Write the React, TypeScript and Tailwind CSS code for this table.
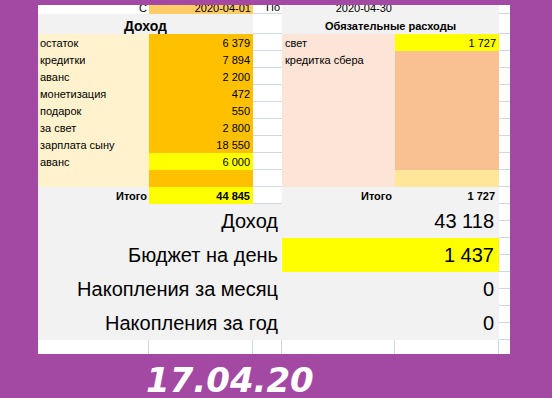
import React from "react";

const line = "border-b border-[#d0d7e5]";
const data = "flex items-end text-[11px] leading-[15px] px-[2px]";
const big = "flex items-center text-[20px] leading-[23px] bg-[#f2f2f2]";

const income: [string, string, string][] = [
  ["остаток", "6 379", "bg-[#ffc000]"],
  ["кредитки", "7 894", "bg-[#ffc000]"],
  ["аванс", "2 200", "bg-[#ffc000]"],
  ["монетизация", "472", "bg-[#ffc000]"],
  ["подарок", "550", "bg-[#ffc000]"],
  ["за свет", "2 800", "bg-[#ffc000]"],
  ["зарплата сыну", "18 550", "bg-[#ffc000]"],
  ["аванс", "6 000", "bg-[#ffff00]"],
  ["", "", "bg-[#ffc000]"],
];

const expenses: [string, string, string][] = [
  ["свет", "1 727", "bg-[#ffff00]"],
  ["кредитка сбера", "", "bg-[#f9c191]"],
  ["", "", "bg-[#f9c191]"],
  ["", "", "bg-[#f9c191]"],
  ["", "", "bg-[#f9c191]"],
  ["", "", "bg-[#f9c191]"],
  ["", "", "bg-[#f9c191]"],
  ["", "", "bg-[#f9c191]"],
  ["", "", "bg-[#ffe699]"],
];

const summary = [
  { label: "Доход", value: "43 118", hl: false },
  { label: "Бюджет на день", value: "1 437", hl: true },
  { label: "Накопления за месяц", value: "0", hl: false },
  { label: "Накопления за год", value: "0", hl: false },
];

const App = () => {
  return (
    <div className="w-[552px] h-[398px] bg-[#a349a4] pt-[5px] overflow-hidden font-['Liberation_Sans',Arial,sans-serif] text-black">
      {/* Sheet */}
      <div className="ml-[38px] w-[472px] bg-white grid grid-cols-[111px_104px_29px_113px_104px_11px] grid-rows-[9px_20px_repeat(18,17px)_14px] overflow-hidden">
        {/* Row 1: dates */}
        <div className="flex items-end justify-end px-[2px] text-[11px] leading-[12px] overflow-hidden">С</div>
        <div className="flex items-end justify-end px-[2px] text-[11px] leading-[12px] overflow-hidden bg-[#ffcc66]">2020-04-01</div>
        <div className={`flex items-end justify-end px-[2px] text-[11px] leading-[12px] overflow-hidden ${line}`}>По</div>
        <div className="flex items-end justify-end px-[3px] text-[11px] leading-[12px] overflow-hidden bg-[#f2f2f2]">2020-04-30</div>
        <div className="bg-[#f2f2f2]" />
        <div className={line} />

        {/* Row 2: headers */}
        <div className="col-span-2 flex items-end justify-center bg-[#f2f2f2] text-[14px] leading-[16px] font-bold">Доход</div>
        <div className={line} />
        <div className="col-span-2 flex items-end justify-center bg-[#f2f2f2] text-[11px] leading-[15px] font-bold">Обязательные расходы</div>
        <div className={line} />

        {/* Data rows */}
        {income.map(([label, value, bg], i) => (
          <React.Fragment key={i}>
            <div className={`${data} bg-[#fff2cc]`}>{label}</div>
            <div className={`${data} justify-end pr-[3px] ${bg}`}>{value}</div>
            <div className={line} />
            <div className={`${data} pl-[3px] bg-[#fce4d6]`}>{expenses[i][0]}</div>
            <div className={`${data} justify-end pr-[3px] ${expenses[i][2]}`}>{expenses[i][1]}</div>
            <div className={line} />
          </React.Fragment>
        ))}

        {/* Totals */}
        <div className={`${data} justify-end bg-[#f2f2f2] font-bold text-[10.5px]`}>Итого</div>
        <div className={`${data} justify-end pr-[3px] bg-[#ffff00] font-bold text-[10.5px]`}>44 845</div>
        <div className={line} />
        <div className={`${data} justify-end pr-[3px] bg-[#f2f2f2] font-bold text-[10.5px]`}>Итого</div>
        <div className={`${data} justify-end pr-[4px] bg-[#f2f2f2] font-bold text-[10.5px]`}>1 727</div>
        <div className={line} />

        {/* Summary */}
        {summary.map((s) => (
          <React.Fragment key={s.label}>
            <div className={`${big} col-span-3 row-span-2 justify-end pr-[4px]`}>{s.label}</div>
            <div className={`${big} col-span-2 row-span-2 justify-end pr-[5px] ${s.hl ? "bg-[#ffff00]" : ""}`}>{s.value}</div>
            <div className={line} />
            <div className={line} />
          </React.Fragment>
        ))}

        {/* Last empty row */}
        <div className="border-r border-[#d0d7e5]" />
        <div className="border-r border-[#d0d7e5]" />
        <div className="border-r border-[#d0d7e5]" />
        <div className="border-r border-[#d0d7e5]" />
        <div className="border-r border-[#d0d7e5]" />
        <div />
      </div>

      {/* Date */}
      <div className="mt-[9px] ml-[146px] text-white font-['DejaVu_Sans',sans-serif] font-bold italic text-[34px] leading-[34px]">
        17.04.20
      </div>
    </div>
  );
};

export default App;
